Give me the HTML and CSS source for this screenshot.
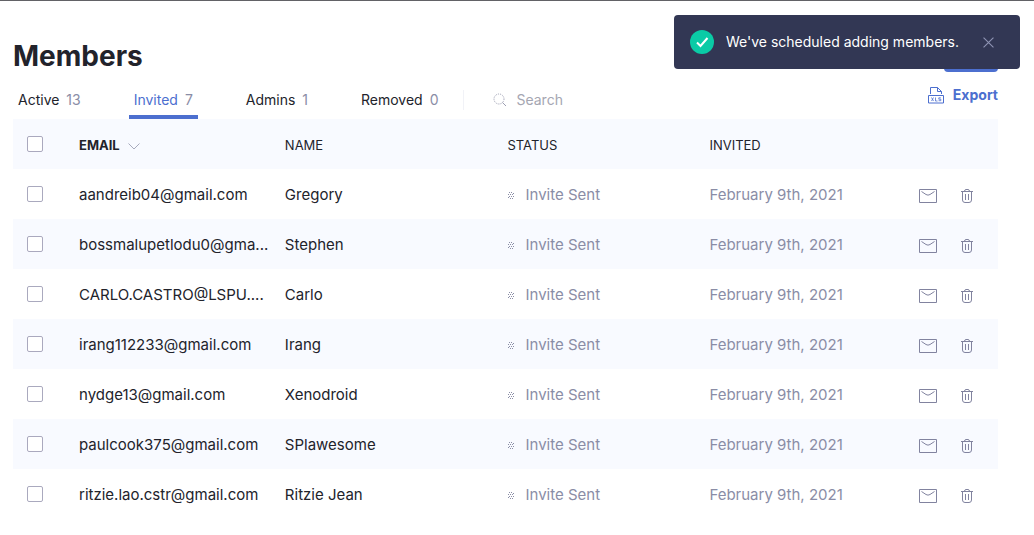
FILE: index.html
```html
<!DOCTYPE html>
<html lang="en">
<head>
<meta charset="utf-8">
<meta name="viewport" content="width=device-width, initial-scale=1">
<title>Members</title>
<link rel="stylesheet" href="styles.css">
</head>
<body>
<svg class="symbols" aria-hidden="true">
  <symbol id="mail" viewBox="0 0 18 14"><path d="M.5.5h17v13H.5zM2.500 2.500l4.500 3q2 1.300 4 0l4.500-3" fill="none" stroke="currentColor"/></symbol>
  <symbol id="trash" viewBox="0 0 12 14"><path d="M0 2.500h12M3.500 2.500Q3.500.5 5 .5h2Q8.500.5 8.500 2.500M1.500 2.500v8.500q0 2.500 2.500 2.500h4q2.500 0 2.500-2.500V2.500M4.500 5v6M7.500 5v6" fill="none" stroke="currentColor"/></symbol>
  <symbol id="sent" viewBox="0 0 8 8"><path d="M2 1h1v1H2zM4 1h1v1H4zM1 3h1v1H1zM3 3h1v1H3zM5 3h1v1H5zM2 5h1v1H2zM4 5h1v1H4zM6 2h1v1H6zM6 5h1v1H6zM3 7h1v1H3zM5 7h1v1H5zM1 6h1v1H1z" fill="currentColor"/></symbol>
</svg>

<main class="page">
  <header class="top">
    <div class="heading">
      <h1 class="title">Members</h1>
      <div class="filters">
        <nav class="tabs">
          <a class="tab" href="#active">Active <span class="count">13</span></a>
          <a class="tab tab-current" href="#invited" aria-current="page">Invited <span class="count">7</span></a>
          <a class="tab" href="#admins">Admins <span class="count">1</span></a>
          <a class="tab" href="#removed">Removed <span class="count">0</span></a>
        </nav>
        <label class="search">
          <svg class="search-icon" viewBox="0 0 14 14" aria-hidden="true"><circle cx="6" cy="6" r="5" fill="none" stroke="currentColor" stroke-dasharray="1 1"/><path d="M9.500 9.500l3.500 3.500" fill="none" stroke="currentColor"/></svg>
          <input class="search-input" type="search" placeholder="Search" aria-label="Search">
        </label>
      </div>
    </div>
    <div class="actions">
      <button class="add" type="button"></button>
      <button class="export" type="button">
        <svg class="export-icon" viewBox="0 0 16 17" aria-hidden="true"><path d="M2.500 7V.5h7l4 4V7M9.500.5v4h4M.5 8.500h15v7.500H.5z" fill="none" stroke="currentColor"/><path d="M3.500 10.500l2 3.500M5.500 10.500l-2 3.500M7.500 10.500V14h2M12.800 10.800h-2v1.400h2v1.500h-2.200" fill="none" stroke="currentColor" stroke-width=".8"/></svg>
        Export
      </button>
    </div>
  </header>

  <table class="members">
    <colgroup><col class="col-check"><col class="col-email"><col class="col-name"><col class="col-status"><col class="col-date"><col></colgroup>
    <thead>
      <tr>
        <th><input class="check" type="checkbox" aria-label="Select all"></th>
        <th class="sorted" aria-sort="descending">EMAIL <svg class="sort-icon" viewBox="0 0 12 7" aria-hidden="true"><path d="M.5.5L6 6 11.500.5" fill="none" stroke="currentColor"/></svg></th>
        <th>NAME</th><th>STATUS</th><th>INVITED</th><td></td>
      </tr>
    </thead>
    <tbody id="rows"></tbody>
  </table>
</main>

<div class="toast" role="status">
  <svg class="toast-icon" viewBox="0 0 24 24" aria-hidden="true"><circle cx="12" cy="12" r="12" fill="#0acba6"/><path d="M7 12.500l3.500 3.500L17.500 8" fill="none" stroke="#fff" stroke-width="2"/></svg>
  <span class="toast-text">We've scheduled adding members.</span>
  <button class="toast-close" type="button" aria-label="Close"><svg class="close-icon" viewBox="0 0 10 10" aria-hidden="true"><path d="M.5.5l9 9M9.500.5l-9 9" fill="none" stroke="currentColor"/></svg></button>
</div>
<script src="members.js"></script>
</body>
</html>
```
FILE: styles.css
```css
* { box-sizing: border-box; }
body { margin: 0; border-top: 1px solid #626266; background: #fff; color: #22232b; font: 15px/20px Inter, "Liberation Sans", sans-serif; }
button, input { font: inherit; }
button { border: 0; padding: 0; background: none; color: inherit; cursor: pointer; }
.symbols { display: none; }
.page { padding: 38px 36px 16px 13px; }

.top { display: flex; justify-content: space-between; }
.title { margin: 0; font-size: 28px; line-height: 34px; font-weight: 700; }
.filters { display: flex; margin-top: 8px; height: 38px; }
.tabs { display: flex; gap: 43px; }
.tab { padding: 9px 5px 5px; border-bottom: 4px solid transparent; font-size: 14px; color: #22232b; text-decoration: none; white-space: nowrap; }
.tab-current { color: #4c6fcf; border-color: #4c6fcf; }
.count { margin-left: 3px; color: #8a8da6; }
.search { display: flex; align-items: center; gap: 9px; height: 20px; margin: 9px 0 0 20px; padding-left: 29px; border-left: 1px solid #f1f2f7; color: #9c9eb2; }
.search-icon { width: 14px; height: 14px; }
.search-input { width: 160px; border: 0; padding: 0; background: none; font-size: 14px; outline: 0; }
.search-input::placeholder { color: #a5a6b2; opacity: 1; }

.actions { display: flex; flex-direction: column; align-items: flex-end; gap: 13px; }
.add { width: 54px; height: 33px; border-radius: 4px; background: #4c6fcf; }
.export { display: flex; align-items: center; gap: 9px; color: #4c6fcf; font-size: 14px; font-weight: 700; }
.export-icon { width: 16px; height: 17px; }

.members { width: 100%; table-layout: fixed; border-collapse: collapse; }
.col-check { width: 66px; }
.col-email { width: 20.900%; }
.col-name { width: 22.600%; }
.col-status { width: 20.500%; }
.col-date { width: 21.300%; }
.members tr { height: 50px; }
.members th, .members td { padding: 2px 0 0; text-align: left; vertical-align: middle; white-space: nowrap; }
.members th:first-child, .members td:first-child { padding: 0; }
.members th { font-size: 13px; font-weight: 400; }
.members .sorted { font-weight: 700; }
.members thead tr, .members tbody tr:nth-child(even) { background: #f8faff; }
.members .muted { color: #8a8da6; }
.sort-icon { width: 12px; height: 7px; margin-left: 5px; color: #a7aabd; }
.check { appearance: none; display: block; width: 16px; height: 16px; margin: 0 0 0 14px; border: 1px solid #aaa9be; border-radius: 2px; background: #fff; }
.check:checked { background: #4c6fcf; }
.status { display: flex; align-items: center; gap: 10px; }
.sent-icon { width: 8px; height: 8px; }
.tools { display: flex; align-items: center; gap: 24px; padding-top: 2px; color: #81839f; }
.tool { display: flex; }
.mail-icon { width: 18px; height: 14px; }
.trash-icon { width: 12px; height: 14px; }

.toast { position: absolute; top: 15px; right: 14px; display: flex; align-items: center; min-width: 346px; height: 54px; padding: 0 26px 0 16px; border-radius: 4px; background: #323754; color: #fff; font-size: 14px; }
.toast-icon { width: 24px; height: 24px; margin-right: 12px; }
.toast-close { display: flex; margin-left: auto; color: #8f94b4; }
.close-icon { width: 11px; height: 11px; }
```
FILE: members.js
```js
const members = [
  ["aandreib04@gmail.com", "Gregory"],
  ["bossmalupetlodu0@gma...", "Stephen"],
  ["CARLO.CASTRO@LSPU....", "Carlo"],
  ["irang112233@gmail.com", "Irang"],
  ["nydge13@gmail.com", "Xenodroid"],
  ["paulcook375@gmail.com", "SPlawesome"],
  ["ritzie.lao.cstr@gmail.com", "Ritzie Jean"]
];

document.getElementById("rows").innerHTML = members.map(([email, name]) => `
  <tr>
    <td><input class="check" type="checkbox" aria-label="Select ${name}"></td>
    <td>${email}</td>
    <td>${name}</td>
    <td class="muted"><div class="status"><svg class="sent-icon" aria-hidden="true"><use href="#sent"/></svg>Invite Sent</div></td>
    <td class="muted">February 9th, 2021</td>
    <td><div class="tools">
      <button class="tool" type="button" aria-label="Resend invite"><svg class="mail-icon" aria-hidden="true"><use href="#mail"/></svg></button>
      <button class="tool" type="button" aria-label="Delete invite"><svg class="trash-icon" aria-hidden="true"><use href="#trash"/></svg></button>
    </div></td>
  </tr>`).join("");
```
